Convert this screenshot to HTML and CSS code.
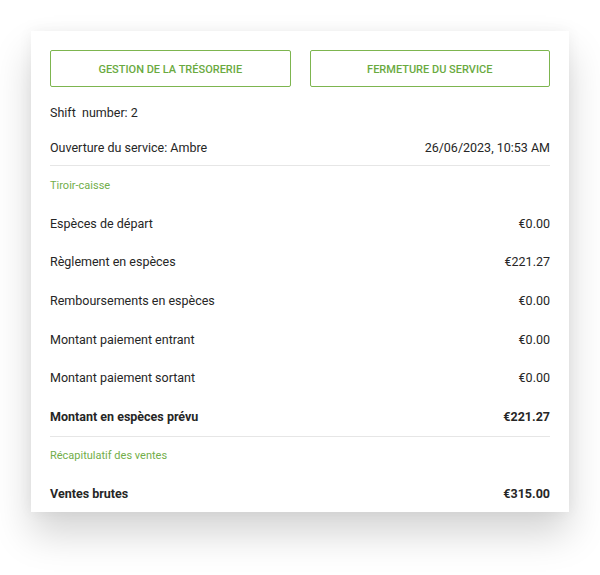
FILE: index.html
```
<!DOCTYPE html>
<html lang="fr">
<head>
<meta charset="utf-8">
<link rel="stylesheet" href="styles.css">
</head>
<body>
<div class="card">
  <div class="actions">
    <button class="btn">GESTION DE LA TRÉSORERIE</button>
    <button class="btn">FERMETURE DU SERVICE</button>
  </div>
  <div class="row row-shift"><span>Shift&nbsp; number: 2</span></div>
  <div class="row row-open"><span>Ouverture du service: Ambre</span><span>26/06/2023, 10:53 AM</span></div>
  <div class="divider"></div>
  <div class="section-title">Tiroir-caisse</div>
  <div class="row"><span>Espèces de départ</span><span>€0.00</span></div>
  <div class="row"><span>Règlement en espèces</span><span>€221.27</span></div>
  <div class="row"><span>Remboursements en espèces</span><span>€0.00</span></div>
  <div class="row"><span>Montant paiement entrant</span><span>€0.00</span></div>
  <div class="row"><span>Montant paiement sortant</span><span>€0.00</span></div>
  <div class="row bold"><span>Montant en espèces prévu</span><span>€221.27</span></div>
  <div class="divider"></div>
  <div class="section-title">Récapitulatif des ventes</div>
  <div class="row bold"><span>Ventes brutes</span><span>€315.00</span></div>
</div>
</body>
</html>
```
FILE: styles.css
```
html, body {
  margin: 0;
  padding: 0;
  background: #ffffff;
}
body {
  font-family: Roboto, "Liberation Sans", Arial, sans-serif;
  color: #262626;
  min-height: 575px;
  padding-top: 31px;
  box-sizing: border-box;
}
.card {
  margin: 0 0 0 31px;
  width: 538px;
  height: 481px;
  box-sizing: border-box;
  padding: 19px 19px 0 19px;
  background: #ffffff;
  overflow: hidden;
  box-shadow: 0 22px 36px rgba(0, 0, 0, 0.17), 0 0 14px rgba(0, 0, 0, 0.05);
}
.actions {
  display: grid;
  grid-template-columns: 1fr 1fr;
  column-gap: 19px;
  margin-bottom: 7px;
}
.btn {
  height: 37px;
  background: #ffffff;
  border: 1px solid #7db54f;
  border-radius: 2px;
  color: #6aaa3f;
  font-family: Roboto, "Liberation Sans", Arial, sans-serif;
  font-size: 11px;
  font-weight: 500;
  padding: 1px 0 0 0;
}
.row {
  display: flex;
  justify-content: space-between;
  align-items: center;
  height: 38.6px;
  font-size: 12.5px;
}
.row-shift {
  height: 36px;
}
.row-open {
  height: 35px;
}
.bold {
  font-weight: 700;
}
.divider {
  height: 1px;
  background: #e6e6e6;
}
.section-title {
  height: 38px;
  display: flex;
  align-items: center;
  font-size: 11px;
  color: #72ae4a;
}
```
